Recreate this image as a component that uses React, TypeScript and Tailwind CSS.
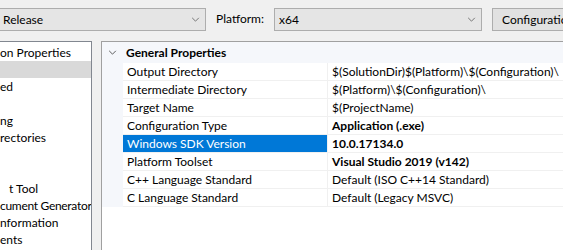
import React from 'react';

const Chevron: React.FC<{ className?: string }> = ({ className = '' }) => (
  <svg viewBox="0 0 10 6" className={className} fill="none" stroke="currentColor" strokeWidth={1}>
    <path d="M1 1l4 4 4-4" />
  </svg>
);

const treeRows: { text: string; pad: number; selected?: boolean; tight?: boolean }[] = [
  { text: 'on Properties', pad: 0 },
  { text: '', pad: 0, selected: true },
  { text: 'ed', pad: 0 },
  { text: '', pad: 0 },
  { text: 'ng', pad: 0 },
  { text: 'rectories', pad: 0 },
  { text: '', pad: 0 },
  { text: '', pad: 0 },
  { text: 't Tool', pad: 9 },
  { text: 'cument Generator', pad: 0, tight: true },
  { text: 'nformation', pad: 0 },
  { text: 'ents', pad: 0 },
];

const props: { label: string; value: string; bold?: boolean; selected?: boolean }[] = [
  { label: 'Output Directory', value: '$(SolutionDir)$(Platform)\\$(Configuration)\\' },
  { label: 'Intermediate Directory', value: '$(Platform)\\$(Configuration)\\' },
  { label: 'Target Name', value: '$(ProjectName)' },
  { label: 'Configuration Type', value: 'Application (.exe)', bold: true },
  { label: 'Windows SDK Version', value: '10.0.17134.0', bold: true, selected: true },
  { label: 'Platform Toolset', value: 'Visual Studio 2019 (v142)', bold: true },
  { label: 'C++ Language Standard', value: 'Default (ISO C++14 Standard)' },
  { label: 'C Language Standard', value: 'Default (Legacy MSVC)' },
];

export default function App() {
  return (
    <div
      className="w-[563px] h-[250px] overflow-hidden bg-[#f0f0f0] text-[12px] text-black flex flex-col"
      style={{ fontFamily: 'Lato, "Noto Sans", sans-serif' }}
    >
      {/* toolbar */}
      <div className="h-[41px] flex items-start pt-[8px] shrink-0">
        <div className="w-[206px] h-[23px] bg-[#e5e5e5] border border-l-0 border-[#adadad] flex items-center justify-between pl-[3px] pr-[5px]">
          <span>Release</span>
          <Chevron className="w-[9px] h-[5px] text-[#606060]" />
        </div>
        <span className="ml-[10px] mt-[3px] leading-[16px]">Platform:</span>
        <div className="ml-[10px] w-[208px] h-[23px] bg-[#e5e5e5] border border-[#adadad] flex items-center justify-between pl-[4px] pr-[5px]">
          <span>x64</span>
          <Chevron className="w-[9px] h-[5px] text-[#606060]" />
        </div>
        <div className="ml-[10px] h-[23px] flex-1 bg-[#e1e1e1] border border-r-0 border-[#adadad] flex items-center pl-[9px] whitespace-nowrap overflow-hidden">
          Configuration Manager...
        </div>
      </div>

      <div className="flex flex-1 min-h-0">
        {/* tree */}
        <div className="w-[92px] shrink-0 bg-white border border-l-0 border-b-0 border-[#828790] pt-[2px] overflow-hidden">
          {treeRows.map((r, i) => (
            <div
              key={i}
              className={`h-[17px] leading-[17px] whitespace-nowrap ${r.selected ? 'bg-[#d9d9d9]' : ''} ${
                r.tight ? 'tracking-[-0.3px]' : ''
              }`}
              style={{ paddingLeft: r.pad }}
            >
              {r.text}
            </div>
          ))}
        </div>

        {/* property grid */}
        <div className="ml-[9px] flex-1 bg-white border-t border-l border-[#a0a0a0] overflow-hidden">
          <div className="h-[21px] bg-[#f5f7fb] flex items-center">
            <div className="w-[21px] flex justify-center">
              <Chevron className="w-[9px] h-[5px] text-[#404040]" />
            </div>
            <span className="font-bold pl-[3px]">General Properties</span>
          </div>
          <div className="flex">
            <div className="w-[21px] bg-[#f5f7fb] shrink-0" />
            <div className="flex-1">
              {props.map((p) => (
                <div key={p.label} className="h-[18px] flex border-b border-[#f0f0f0]">
                  <div
                    className={`w-[205px] shrink-0 pl-[4px] leading-[17px] border-r border-[#f0f0f0] whitespace-nowrap ${
                      p.selected ? 'bg-[#0078d7] text-white' : ''
                    }`}
                  >
                    {p.label}
                  </div>
                  <div className={`pl-[4px] leading-[17px] whitespace-nowrap ${p.bold ? 'font-bold' : ''}`}>
                    {p.value}
                  </div>
                </div>
              ))}
            </div>
          </div>
        </div>
      </div>
    </div>
  );
}
